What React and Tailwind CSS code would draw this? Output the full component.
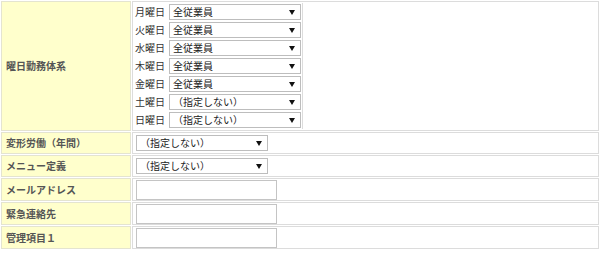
import React from "react";

const font = { fontFamily: '"Noto Sans CJK JP", "Noto Sans", sans-serif' };

function Arrow() {
  return (
    <svg width="6" height="5" viewBox="0 0 6 5" className="shrink-0">
      <polygon points="0,0 6,0 3,5" fill="#111" />
    </svg>
  );
}

function Select({ value, w = "w-[132px]" }) {
  return (
    <div className={`${w} h-[16px] border border-[#bdbdbd] bg-white flex items-center justify-between pl-[3px] pr-[5px] text-[10px] leading-none text-[#222]`}>
      <span>{value}</span>
      <Arrow />
    </div>
  );
}

function Input() {
  return <div className="w-[141px] h-[20px] border border-[#c4c4c4] bg-white" />;
}

const days = [
  ["月曜日", "全従業員"],
  ["火曜日", "全従業員"],
  ["水曜日", "全従業員"],
  ["木曜日", "全従業員"],
  ["金曜日", "全従業員"],
  ["土曜日", "（指定しない）"],
  ["日曜日", "（指定しない）"],
];

function Label({ children }) {
  return (
    <div className="bg-[#ffffcc] border border-[#e4e4d0] flex items-center pl-[4px] text-[10px] font-bold text-[#555] leading-none">
      {children}
    </div>
  );
}

function Value({ children, h }) {
  return (
    <div className={`${h} bg-white border border-[#dcdcdc] flex items-center pl-[3px]`}>
      {children}
    </div>
  );
}

export default function App() {
  return (
    <div className="w-[600px] h-[254px] bg-white overflow-hidden" style={font}>
      <div className="grid grid-cols-[130px_1fr] gap-px p-px">
        <Label>曜日勤務体系</Label>
        <div className="h-[130px] bg-white border border-[#dcdcdc] py-px">
          <div className="w-[170px] flex flex-col border-r border-[#dcdcdc] pr-px">
            {days.map(([d, v]) => (
              <div key={d} className="h-[18px] flex items-center">
                <div className="w-[36px] pl-[2px] text-[10px] text-[#333] leading-none">{d}</div>
                <Select value={v} />
              </div>
            ))}
          </div>
        </div>

        <Label>変形労働（年間）</Label>
        <Value h="h-[22px]"><Select value="（指定しない）" /></Value>

        <Label>メニュー定義</Label>
        <Value h="h-[22px]"><Select value="（指定しない）" /></Value>

        <Label>メールアドレス</Label>
        <Value h="h-[23px]"><Input /></Value>

        <Label>緊急連絡先</Label>
        <Value h="h-[23px]"><Input /></Value>

        <Label>管理項目１</Label>
        <Value h="h-[23px]"><Input /></Value>
      </div>
    </div>
  );
}
